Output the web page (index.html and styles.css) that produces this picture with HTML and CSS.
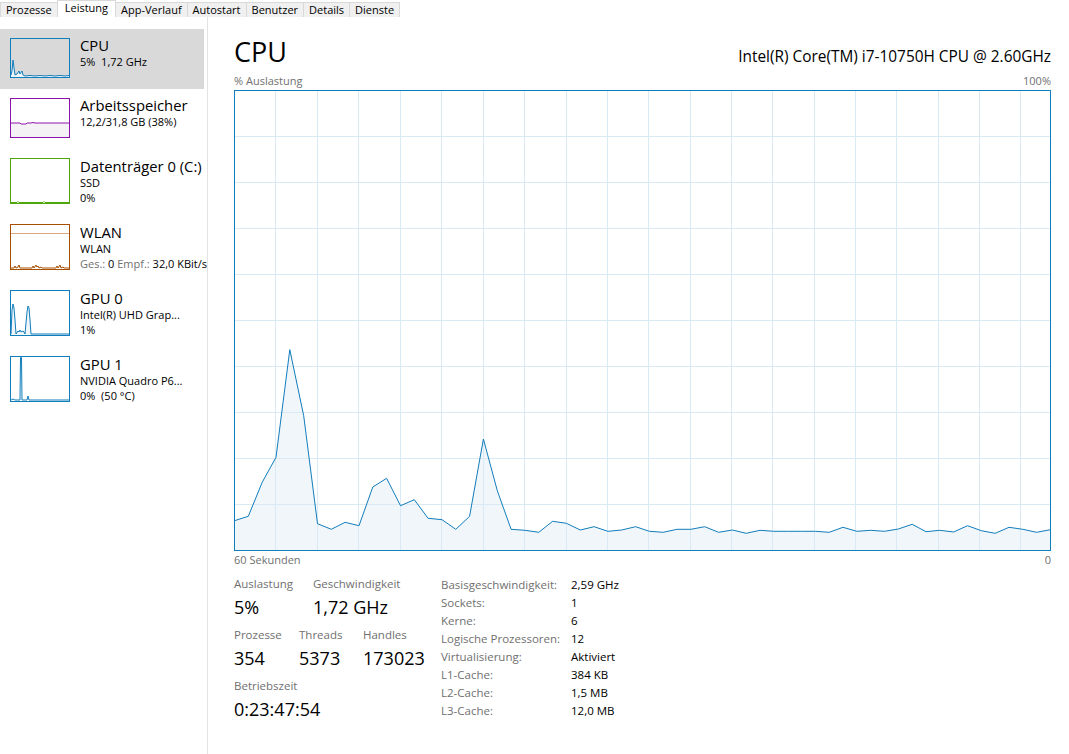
FILE: index.html
```html
<!DOCTYPE html>
<html lang="de">
<head>
    <meta charset="UTF-8">
    <title>Task-Manager - Leistung</title>
    <link rel="stylesheet" href="styles.css">
</head>
<body>

    <div class="tabs">
        <div class="tab">Prozesse</div>
        <div class="tab active">Leistung</div>
        <div class="tab">App-Verlauf</div>
        <div class="tab">Autostart</div>
        <div class="tab">Benutzer</div>
        <div class="tab">Details</div>
        <div class="tab">Dienste</div>
    </div>

    <div class="perf">
        <aside class="sidebar">
            <div class="item selected">
                <svg class="mini" width="60" height="40" viewBox="0 0 60 40">
                    <polygon class="cpu-fill" points="1,37 2,33 3,22 4,30 5,37 7,36 9,33 10,36 12,33 13,37 15,38 59,38 59,39 1,39"/>
                    <polyline class="cpu-line" points="1,37 2,33 3,22 4,30 5,37 7,36 9,33 10,36 12,33 13,37 15,38 20,37.5 25,38 30,37.5 35,38 40,37.5 45,38 50,37.5 55,38 59,37.5"/>
                    <rect class="cpu-box" x="0.5" y="0.5" width="59" height="39"/>
                </svg>
                <div class="info">
                    <div class="title">CPU</div>
                    <div class="sub">5%&nbsp; 1,72 GHz</div>
                </div>
            </div>

            <div class="item">
                <svg class="mini" width="60" height="40" viewBox="0 0 60 40">
                    <polygon class="mem-fill" points="1,25 10,25 11,26 16,26 17,25 21,25 23,24.5 25,25 59,25 59,39 1,39"/>
                    <polyline class="mem-line" points="1,25 10,25 11,26 16,26 17,25 21,25 23,24.5 25,25 59,25"/>
                    <rect class="mem-box" x="0.5" y="0.5" width="59" height="39"/>
                </svg>
                <div class="info">
                    <div class="title">Arbeitsspeicher</div>
                    <div class="sub">12,2/31,8 GB (38%)</div>
                </div>
            </div>

            <div class="item tall">
                <svg class="mini" width="60" height="46" viewBox="0 0 60 46">
                    <polyline class="disk-line" points="1,44.5 7,44.5 8,43.5 9,44.5 33,44.5 34,43.5 35,44.5 59,44.5"/>
                    <rect class="disk-box" x="0.5" y="0.5" width="59" height="45"/>
                </svg>
                <div class="info">
                    <div class="title">Datenträger 0 (C:)</div>
                    <div class="sub">SSD</div>
                    <div class="sub">0%</div>
                </div>
            </div>

            <div class="item tall">
                <svg class="mini" width="60" height="46" viewBox="0 0 60 46">
                    <line class="net-ref" x1="1" y1="9.5" x2="59" y2="9.5"/>
                    <polyline class="net-line" points="1,44 4,44 5,42 6,44 8,43 9,41 10,44 22,44 23,42 24,44 26,41 27,43 28,42 29,44 31,43 32,44 46,44 47,42 48,44 50,41 51,44 53,43 54,44 59,44"/>
                    <rect class="net-box" x="0.5" y="0.5" width="59" height="45"/>
                </svg>
                <div class="info">
                    <div class="title">WLAN</div>
                    <div class="sub">WLAN</div>
                    <div class="sub"><span class="dim">Ges.:</span> 0 <span class="dim">Empf.:</span> 32,0 KBit/s</div>
                </div>
            </div>

            <div class="item tall">
                <svg class="mini" width="60" height="46" viewBox="0 0 60 46">
                    <polygon class="gpu-fill" points="1,44 2,20 3,14 4,18 5,30 6,44 8,41 9,42 10,40 11,42 13,41 14,42 15,44 17,22 18,16 19,18 20,30 21,44 59,44 59,45 1,45"/>
                    <polyline class="gpu-line" points="1,44 2,20 3,14 4,18 5,30 6,44 8,41 9,42 10,40 11,42 13,41 14,42 15,44 17,22 18,16 19,18 20,30 21,44 59,44"/>
                    <rect class="gpu-box" x="0.5" y="0.5" width="59" height="45"/>
                </svg>
                <div class="info">
                    <div class="title">GPU 0</div>
                    <div class="sub">Intel(R) UHD Grap...</div>
                    <div class="sub">1%</div>
                </div>
            </div>

            <div class="item tall">
                <svg class="mini" width="60" height="46" viewBox="0 0 60 46">
                    <polyline class="gpu-line" points="1,44 3,43 5,44 10,44 10.5,1.5 11.5,1.5 12,44 17,44 18,40 19,44 59,44"/>
                    <rect class="gpu-box" x="0.5" y="0.5" width="59" height="45"/>
                </svg>
                <div class="info">
                    <div class="title">GPU 1</div>
                    <div class="sub">NVIDIA Quadro P6...</div>
                    <div class="sub">0%&nbsp; (50 °C)</div>
                </div>
            </div>
        </aside>

        <main class="detail">
            <div class="head">
                <h1>CPU</h1>
                <span class="model">Intel(R) Core(TM) i7-10750H CPU @ 2.60GHz</span>
            </div>

            <div class="axis top">
                <span>% Auslastung</span>
                <span>100%</span>
            </div>

            <svg class="chart" width="817" height="461" viewBox="0 0 817 461">
                <polygon class="chart-fill" points="0.5,430.7 14.3,426.3 28.2,392.3 42,367.3 55.8,259.7 69.7,325.7 83.5,433.7 97.3,439.3 111.1,432.3 125,435.7 138.8,397 152.6,388.3 166.5,415.7 180.3,409.7 194.1,428.3 208,429.7 221.8,439.3 235.6,426.3 249.4,349 263.3,400.7 277.1,439.3 290.9,440.3 304.8,442.3 318.6,431.3 332.4,433.3 346.3,440 360.1,436.7 373.9,441.3 387.7,440 401.6,436.7 415.4,441.3 429.2,442.3 443.1,439.3 456.9,439.3 470.7,436.7 484.6,442.3 498.4,440 512.2,443.3 526,440.3 539.9,441.3 553.7,441.3 567.5,441.3 581.4,441.3 595.2,442.3 609,437.3 622.9,441.3 636.7,440.3 650.5,441.3 664.3,439 678.2,434.3 692,441.7 705.8,440.3 719.7,442 733.5,435.7 747.3,440.7 761.2,443.3 775,437.3 788.8,439.3 802.6,442.3 816.5,439.7 816.5,460.5 0.5,460.5"/>
                <g class="grid">
                    <line x1="41.5" y1="0" x2="41.5" y2="461"/>
                    <line x1="83.5" y1="0" x2="83.5" y2="461"/>
                    <line x1="124.5" y1="0" x2="124.5" y2="461"/>
                    <line x1="166.5" y1="0" x2="166.5" y2="461"/>
                    <line x1="207.5" y1="0" x2="207.5" y2="461"/>
                    <line x1="249.5" y1="0" x2="249.5" y2="461"/>
                    <line x1="290.5" y1="0" x2="290.5" y2="461"/>
                    <line x1="332.5" y1="0" x2="332.5" y2="461"/>
                    <line x1="373.5" y1="0" x2="373.5" y2="461"/>
                    <line x1="414.5" y1="0" x2="414.5" y2="461"/>
                    <line x1="456.5" y1="0" x2="456.5" y2="461"/>
                    <line x1="497.5" y1="0" x2="497.5" y2="461"/>
                    <line x1="538.5" y1="0" x2="538.5" y2="461"/>
                    <line x1="580.5" y1="0" x2="580.5" y2="461"/>
                    <line x1="621.5" y1="0" x2="621.5" y2="461"/>
                    <line x1="662.5" y1="0" x2="662.5" y2="461"/>
                    <line x1="704.5" y1="0" x2="704.5" y2="461"/>
                    <line x1="745.5" y1="0" x2="745.5" y2="461"/>
                    <line x1="786.5" y1="0" x2="786.5" y2="461"/>
                    <line x1="0" y1="46.5" x2="817" y2="46.5"/>
                    <line x1="0" y1="92.5" x2="817" y2="92.5"/>
                    <line x1="0" y1="138.5" x2="817" y2="138.5"/>
                    <line x1="0" y1="184.5" x2="817" y2="184.5"/>
                    <line x1="0" y1="230.5" x2="817" y2="230.5"/>
                    <line x1="0" y1="276.5" x2="817" y2="276.5"/>
                    <line x1="0" y1="322.5" x2="817" y2="322.5"/>
                    <line x1="0" y1="368.5" x2="817" y2="368.5"/>
                    <line x1="0" y1="414.5" x2="817" y2="414.5"/>
                </g>
                <polyline class="chart-line" points="0.5,430.7 14.3,426.3 28.2,392.3 42,367.3 55.8,259.7 69.7,325.7 83.5,433.7 97.3,439.3 111.1,432.3 125,435.7 138.8,397 152.6,388.3 166.5,415.7 180.3,409.7 194.1,428.3 208,429.7 221.8,439.3 235.6,426.3 249.4,349 263.3,400.7 277.1,439.3 290.9,440.3 304.8,442.3 318.6,431.3 332.4,433.3 346.3,440 360.1,436.7 373.9,441.3 387.7,440 401.6,436.7 415.4,441.3 429.2,442.3 443.1,439.3 456.9,439.3 470.7,436.7 484.6,442.3 498.4,440 512.2,443.3 526,440.3 539.9,441.3 553.7,441.3 567.5,441.3 581.4,441.3 595.2,442.3 609,437.3 622.9,441.3 636.7,440.3 650.5,441.3 664.3,439 678.2,434.3 692,441.7 705.8,440.3 719.7,442 733.5,435.7 747.3,440.7 761.2,443.3 775,437.3 788.8,439.3 802.6,442.3 816.5,439.7"/>
                <rect class="chart-border" x="0.5" y="0.5" width="816" height="460"/>
            </svg>

            <div class="axis bottom">
                <span>60 Sekunden</span>
                <span>0</span>
            </div>

            <div class="stats">
                <div class="counters">
                    <div class="group">
                        <div class="stat w-usage">
                            <div class="label">Auslastung</div>
                            <div class="value">5%</div>
                        </div>
                        <div class="stat">
                            <div class="label">Geschwindigkeit</div>
                            <div class="value">1,72 GHz</div>
                        </div>
                    </div>
                    <div class="group">
                        <div class="stat w-proc">
                            <div class="label">Prozesse</div>
                            <div class="value">354</div>
                        </div>
                        <div class="stat w-threads">
                            <div class="label">Threads</div>
                            <div class="value">5373</div>
                        </div>
                        <div class="stat">
                            <div class="label">Handles</div>
                            <div class="value">173023</div>
                        </div>
                    </div>
                    <div class="group">
                        <div class="stat">
                            <div class="label">Betriebszeit</div>
                            <div class="value">0:23:47:54</div>
                        </div>
                    </div>
                </div>

                <div class="specs">
                    <span class="key">Basisgeschwindigkeit:</span><span>2,59 GHz</span>
                    <span class="key">Sockets:</span><span>1</span>
                    <span class="key">Kerne:</span><span>6</span>
                    <span class="key">Logische Prozessoren:</span><span>12</span>
                    <span class="key">Virtualisierung:</span><span>Aktiviert</span>
                    <span class="key">L1-Cache:</span><span>384 KB</span>
                    <span class="key">L2-Cache:</span><span>1,5 MB</span>
                    <span class="key">L3-Cache:</span><span>12,0 MB</span>
                </div>
            </div>
        </main>
    </div>

</body>
</html>
```

FILE: styles.css
```css
/* Task manager, performance tab */
html, body {
    margin: 0;
    height: 100%;
    background: #ffffff;
    color: #000000;
    font-family: "Open Sans", "Noto Sans", sans-serif;
    overflow: hidden;
}

/* Tab strip */
.tabs {
    display: flex;
    align-items: flex-end;
    height: 17px;
}

.tab {
    height: 15px;
    padding: 0 5px;
    box-sizing: border-box;
    font-size: 11px;
    line-height: 13px;
    background-color: #f0f0f0;
    border: 1px solid #d9d9d9;
    border-bottom: none;
    margin-right: -1px;
    white-space: nowrap;
}

.tab.active {
    height: 17px;
    padding: 0 7px;
    background-color: #ffffff;
    position: relative;
    z-index: 1;
}

/* Layout below the tabs */
.perf {
    display: flex;
    height: calc(100% - 17px);
}

.sidebar {
    width: 207px;
    flex-shrink: 0;
    padding-top: 12px;
    border-right: 1px solid #e3e3e3;
    overflow: hidden;
}

.item {
    display: flex;
    align-items: flex-start;
    width: 204px;
    height: 60px;
    box-sizing: border-box;
    padding: 9px 0 0 10px;
    white-space: nowrap;
}

.item.tall {
    height: 66px;
}

.item.selected {
    background-color: #d9d9d9;
}

.mini {
    display: block;
    flex-shrink: 0;
}

.info {
    margin-left: 10px;
    margin-top: -2.5px;
}

.item.tall .info {
    margin-top: -1.5px;
}

.title {
    font-size: 14.8px;
    line-height: 18px;
}

.sub {
    font-size: 11px;
    line-height: 15px;
}

.dim {
    color: #707070;
}

/* Mini graph colours */
.cpu-box, .gpu-box { fill: none; stroke: #117dbb; }
.cpu-line, .gpu-line { fill: none; stroke: #117dbb; stroke-width: 1; }
.cpu-fill, .gpu-fill { fill: #f1f6fa; }

.mem-box { fill: none; stroke: #8b12ae; }
.mem-line { fill: none; stroke: #8b12ae; }
.mem-fill { fill: #f4f2f4; }

.disk-box { fill: none; stroke: #4da60c; }
.disk-line { fill: none; stroke: #4da60c; }

.net-box { fill: none; stroke: #a74f01; }
.net-line { fill: #fcf3eb; stroke: #a74f01; }
.net-ref { stroke: #d8a77c; }

/* Detail panel */
.detail {
    flex: 1;
    padding: 19px 18px 0 26px;
    min-width: 0;
}

.head {
    display: flex;
    justify-content: space-between;
    align-items: baseline;
    margin-bottom: 6px;
}

h1 {
    margin: 0;
    font-size: 27px;
    font-weight: 400;
    line-height: 32px;
}

.model {
    font-size: 15.4px;
}

.axis {
    display: flex;
    justify-content: space-between;
    font-size: 11px;
    line-height: 14px;
    color: #707070;
}

.axis.top {
    margin-bottom: 2px;
}

.axis.bottom {
    margin-top: 2px;
}

.chart {
    display: block;
}

.chart-fill { fill: #f1f6fa; }
.grid line { stroke: #d9eaf4; stroke-width: 1; }
.chart-line { fill: none; stroke: #117dbb; stroke-width: 1; }
.chart-border { fill: none; stroke: #117dbb; }

/* Counters and specs */
.stats {
    display: flex;
    margin-top: 8px;
}

.counters {
    width: 207px;
    flex-shrink: 0;
}

.group {
    display: flex;
    margin-bottom: 7px;
}

.stat.w-usage { width: 79px; }
.stat.w-proc { width: 65px; }
.stat.w-threads { width: 64px; }

.label {
    font-size: 11.5px;
    line-height: 18px;
    color: #707070;
}

.value {
    font-size: 18px;
    line-height: 24px;
    margin-top: 2px;
}

.specs {
    display: grid;
    grid-template-columns: 130px auto;
    grid-auto-rows: 18px;
    align-content: start;
    padding-top: 1px;
    font-size: 11.5px;
    line-height: 18px;
    white-space: nowrap;
}

.specs .key {
    color: #707070;
}
```
